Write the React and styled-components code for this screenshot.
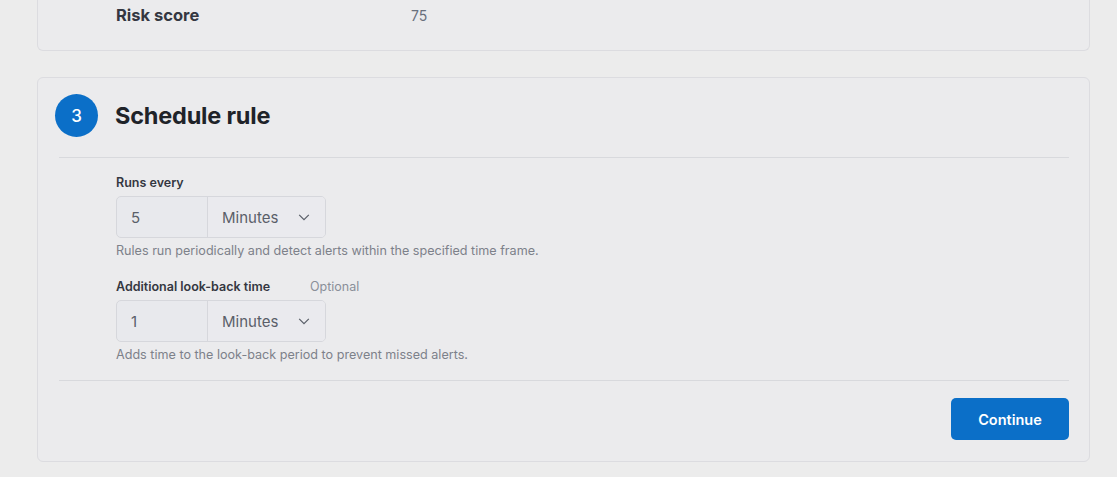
import styled, { createGlobalStyle } from "styled-components";

const GlobalStyle = createGlobalStyle`
  html, body {
    margin: 0;
    padding: 0;
    background: #ececec;
    font-family: Inter, "Noto Sans", sans-serif;
  }
`;

const Page = styled.div`
  width: 1117px;
  height: 477px;
  overflow: hidden;
  padding: 0 27px 0 37px;
  box-sizing: border-box;
  display: flex;
  flex-direction: column;
  gap: 26px;
`;

const Panel = styled.div`
  background: #ebebed;
  border: 1px solid #dcdce0;
  border-radius: 6px;
  ${(p) => p.$top && "border-top: none; border-top-left-radius: 0; border-top-right-radius: 0; margin-top: -20px;"}
`;

const SummaryRow = styled.div`
  display: flex;
  align-items: center;
  height: 70px;
  padding-left: 78px;
  box-sizing: border-box;
`;

const SummaryLabel = styled.div`
  width: 295px;
  font-size: 16.5px;
  font-weight: 700;
  color: #343741;
`;

const SummaryValue = styled.div`
  font-size: 14px;
  color: #69707d;
`;

const Header = styled.div`
  display: flex;
  align-items: center;
  gap: 17px;
  padding: 16px 0 20px 17px;
`;

const StepNumber = styled.div`
  width: 43px;
  height: 43px;
  border-radius: 50%;
  background: #0b6fc8;
  color: #fff;
  display: flex;
  align-items: center;
  justify-content: center;
  font-size: 17px;
  font-weight: 500;
`;

const Title = styled.h2`
  margin: 0;
  font-size: 23.5px;
  font-weight: 700;
  color: #1f2329;
  letter-spacing: -0.2px;
`;

const Divider = styled.hr`
  border: none;
  border-top: 1px solid #d8d9dd;
  margin: 0 20px 0 21px;
`;

const Body = styled.div`
  padding: 18px 0 18px 78px;
  display: flex;
  flex-direction: column;
  gap: 22px;
`;

const Field = styled.div`
  display: flex;
  flex-direction: column;
`;

const LabelRow = styled.div`
  display: flex;
  align-items: baseline;
  margin-bottom: 6px;
  line-height: 14px;
`;

const Label = styled.label`
  width: 194px;
  font-size: 12.5px;
  font-weight: 600;
  color: #343741;
`;

const Optional = styled.span`
  font-size: 12.5px;
  color: #8a8f99;
`;

const InputGroup = styled.div`
  display: flex;
  width: 210px;
  height: 42px;
  border: 1px solid #d6d7dc;
  border-radius: 5px;
  background: #e8e9ed;
  box-sizing: border-box;
  overflow: hidden;
`;

const NumberBox = styled.div`
  width: 91px;
  display: flex;
  align-items: center;
  padding-left: 14px;
  box-sizing: border-box;
  border-right: 1px solid #d6d7dc;
  font-size: 15px;
  color: #5a5f69;
`;

const SelectBox = styled.div`
  flex: 1;
  display: flex;
  align-items: center;
  justify-content: space-between;
  padding: 0 14px;
  font-size: 15px;
  color: #5a5f69;
  background: #eaeaee;
`;

const Help = styled.div`
  margin-top: 6px;
  font-size: 12.6px;
  line-height: 14px;
  color: #7d818a;
`;

const Footer = styled.div`
  display: flex;
  justify-content: flex-end;
  padding: 17px 20px 21px;
`;

const Button = styled.button`
  width: 118px;
  height: 42px;
  background: #0b6fc8;
  color: #fff;
  border: none;
  border-radius: 5px;
  font-family: inherit;
  font-size: 14.5px;
  font-weight: 600;
`;

const Chevron = () => (
  <svg width="14" height="14" viewBox="0 0 16 16" fill="none" stroke="#5a5f69" strokeWidth="1.4">
    <path d="M2.5 5.5 8 11l5.5-5.5" />
  </svg>
);

const DurationInput = ({ value }) => (
  <InputGroup>
    <NumberBox>{value}</NumberBox>
    <SelectBox>
      Minutes
      <Chevron />
    </SelectBox>
  </InputGroup>
);

export default function App() {
  return (
    <>
      <GlobalStyle />
      <Page>
        <Panel $top>
          <SummaryRow>
            <SummaryLabel>Risk score</SummaryLabel>
            <SummaryValue>75</SummaryValue>
          </SummaryRow>
        </Panel>
        <Panel>
          <Header>
            <StepNumber>3</StepNumber>
            <Title>Schedule rule</Title>
          </Header>
          <Divider />
          <Body>
            <Field>
              <LabelRow>
                <Label>Runs every</Label>
              </LabelRow>
              <DurationInput value="5" />
              <Help>Rules run periodically and detect alerts within the specified time frame.</Help>
            </Field>
            <Field>
              <LabelRow>
                <Label>Additional look-back time</Label>
                <Optional>Optional</Optional>
              </LabelRow>
              <DurationInput value="1" />
              <Help>Adds time to the look-back period to prevent missed alerts.</Help>
            </Field>
          </Body>
          <Divider />
          <Footer>
            <Button>Continue</Button>
          </Footer>
        </Panel>
      </Page>
    </>
  );
}
